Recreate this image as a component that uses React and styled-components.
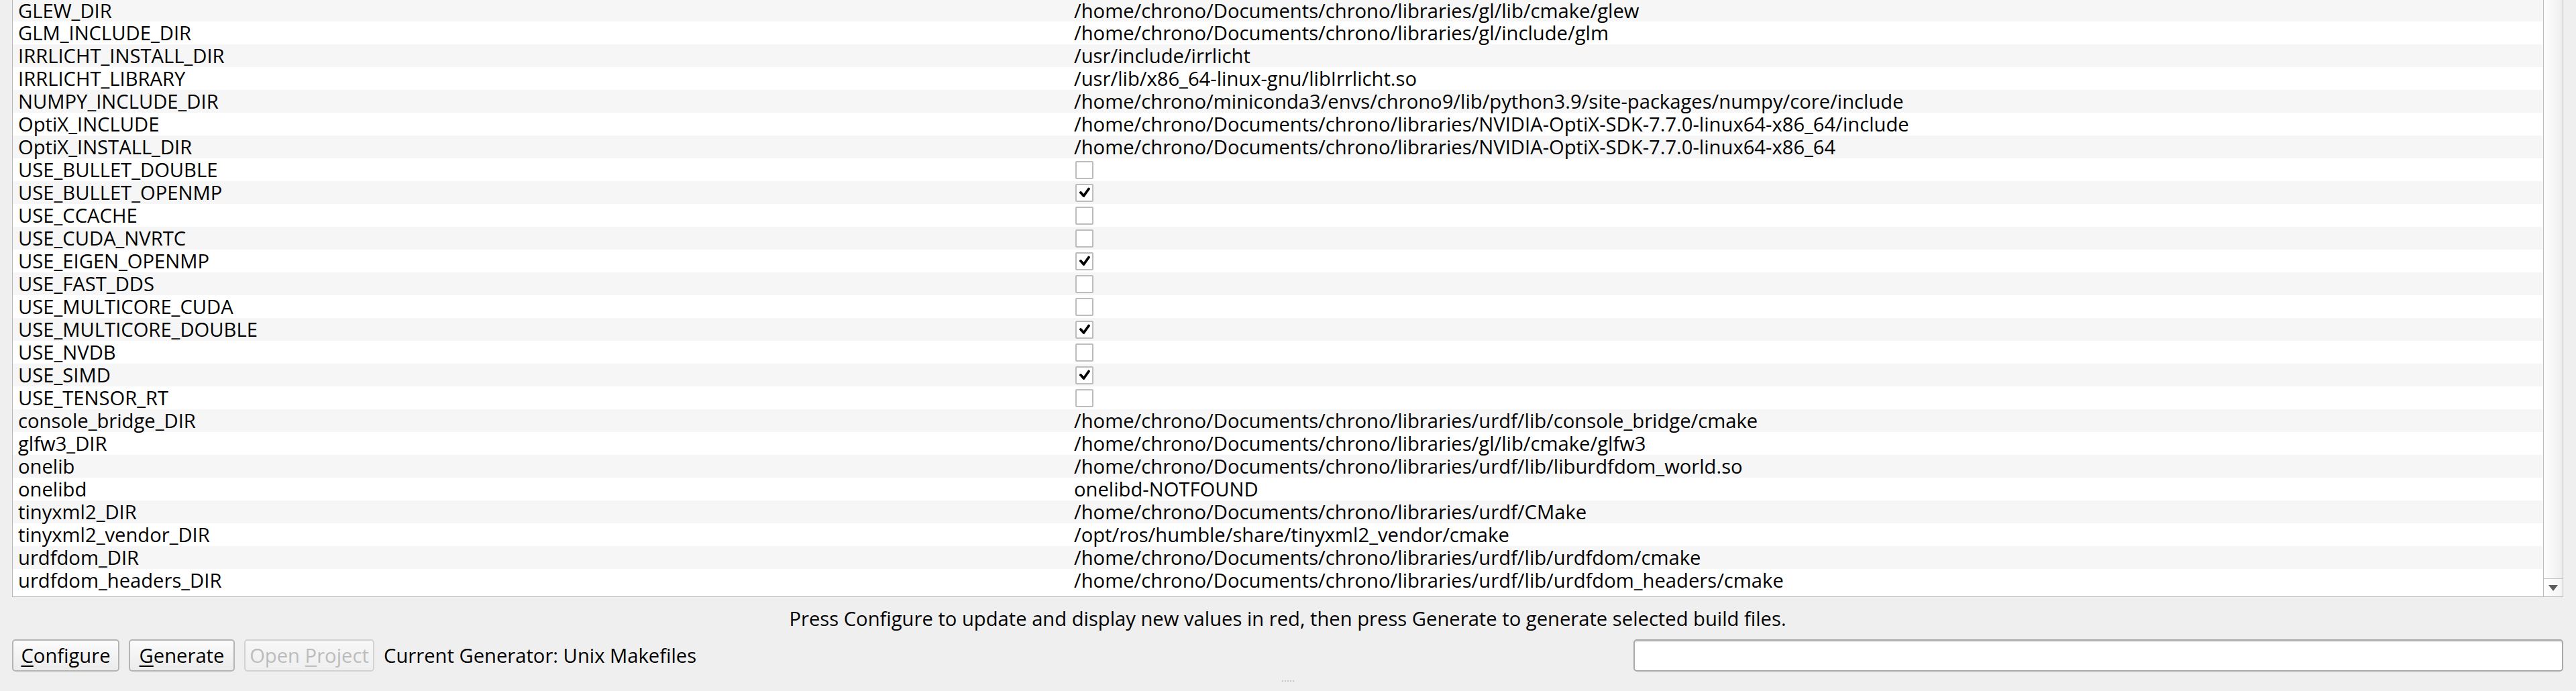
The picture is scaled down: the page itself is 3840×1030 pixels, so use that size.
import React from "react";
import styled, { createGlobalStyle } from "styled-components";

const entries = [
  { name: "GLEW_DIR", value: "/home/chrono/Documents/chrono/libraries/gl/lib/cmake/glew" },
  { name: "GLM_INCLUDE_DIR", value: "/home/chrono/Documents/chrono/libraries/gl/include/glm" },
  { name: "IRRLICHT_INSTALL_DIR", value: "/usr/include/irrlicht" },
  { name: "IRRLICHT_LIBRARY", value: "/usr/lib/x86_64-linux-gnu/libIrrlicht.so" },
  { name: "NUMPY_INCLUDE_DIR", value: "/home/chrono/miniconda3/envs/chrono9/lib/python3.9/site-packages/numpy/core/include" },
  { name: "OptiX_INCLUDE", value: "/home/chrono/Documents/chrono/libraries/NVIDIA-OptiX-SDK-7.7.0-linux64-x86_64/include" },
  { name: "OptiX_INSTALL_DIR", value: "/home/chrono/Documents/chrono/libraries/NVIDIA-OptiX-SDK-7.7.0-linux64-x86_64" },
  { name: "USE_BULLET_DOUBLE", bool: true, checked: false },
  { name: "USE_BULLET_OPENMP", bool: true, checked: true },
  { name: "USE_CCACHE", bool: true, checked: false },
  { name: "USE_CUDA_NVRTC", bool: true, checked: false },
  { name: "USE_EIGEN_OPENMP", bool: true, checked: true },
  { name: "USE_FAST_DDS", bool: true, checked: false },
  { name: "USE_MULTICORE_CUDA", bool: true, checked: false },
  { name: "USE_MULTICORE_DOUBLE", bool: true, checked: true },
  { name: "USE_NVDB", bool: true, checked: false },
  { name: "USE_SIMD", bool: true, checked: true },
  { name: "USE_TENSOR_RT", bool: true, checked: false },
  { name: "console_bridge_DIR", value: "/home/chrono/Documents/chrono/libraries/urdf/lib/console_bridge/cmake" },
  { name: "glfw3_DIR", value: "/home/chrono/Documents/chrono/libraries/gl/lib/cmake/glfw3" },
  { name: "onelib", value: "/home/chrono/Documents/chrono/libraries/urdf/lib/liburdfdom_world.so" },
  { name: "onelibd", value: "onelibd-NOTFOUND" },
  { name: "tinyxml2_DIR", value: "/home/chrono/Documents/chrono/libraries/urdf/CMake" },
  { name: "tinyxml2_vendor_DIR", value: "/opt/ros/humble/share/tinyxml2_vendor/cmake" },
  { name: "urdfdom_DIR", value: "/home/chrono/Documents/chrono/libraries/urdf/lib/urdfdom/cmake" },
  { name: "urdfdom_headers_DIR", value: "/home/chrono/Documents/chrono/libraries/urdf/lib/urdfdom_headers/cmake" }
];

const CheckMark = () => (
  <svg width="18" height="16" viewBox="0 0 18 16">
    <polyline
      points="3,8 7.5,13 15,2.5"
      fill="none"
      stroke="#000"
      strokeWidth="3.8"
      strokeLinecap="round"
      strokeLinejoin="round"
    />
  </svg>
);

const App = () => {
  return (
    <>
      <GlobalStyle />
      <Window>
        <TableFrame>
          <Rows>
            {entries.map((entry, i) => (
              <Row key={entry.name} $alt={i % 2 === 0} $first={i === 0}>
                <NameCell>{entry.name}</NameCell>
                <ValueCell>
                  {entry.bool ? (
                    <CheckBox>{entry.checked && <CheckMark />}</CheckBox>
                  ) : (
                    entry.value
                  )}
                </ValueCell>
              </Row>
            ))}
          </Rows>
          <ScrollBar>
            <Track />
            <ArrowButton>
              <svg width="14" height="9" viewBox="0 0 14 9">
                <polygon points="0,0 14,0 7,9" fill="#5c5c5c" />
              </svg>
            </ArrowButton>
          </ScrollBar>
        </TableFrame>
        <Status>
          Press Configure to update and display new values in red, then press
          Generate to generate selected build files.
        </Status>
        <ButtonRow>
          <Button $width={160}>
            <u>C</u>onfigure
          </Button>
          <Button $width={158}>
            <u>G</u>enerate
          </Button>
          <Button $width={194} disabled>
            Open <u>P</u>roject
          </Button>
          <GeneratorLabel>Current Generator: Unix Makefiles</GeneratorLabel>
          <Spacer />
          <SearchField />
        </ButtonRow>
        <BottomStrip>
          <Grip />
        </BottomStrip>
      </Window>
    </>
  );
};

const GlobalStyle = createGlobalStyle`
  html, body {
    margin: 0;
    padding: 0;
    background: #efefef;
  }
  body {
    font-family: "Open Sans", "DejaVu Sans", sans-serif;
  }
`;

const Window = styled.div`
  width: 3840px;
  height: 1030px;
  box-sizing: border-box;
  padding: 0 19px 0 18px;
  display: flex;
  flex-direction: column;
  background: #efefef;
  color: #000;
  font-size: 29.2px;
  overflow: hidden;
`;

const TableFrame = styled.div`
  height: 890px;
  flex-shrink: 0;
  box-sizing: border-box;
  display: flex;
  background: #fff;
  border: 1px solid #b9b9b9;
  border-top: none;
`;

const Rows = styled.div`
  flex: 1;
  overflow: hidden;
`;

const Row = styled.div`
  display: grid;
  grid-template-columns: 1576px 1fr;
  align-items: center;
  height: ${(p) => (p.$first ? 32 : 34)}px;
  line-height: ${(p) => (p.$first ? 30 : 34)}px;
  background: ${(p) => (p.$alt ? "#f6f6f6" : "#ffffff")};
  white-space: nowrap;
`;

const NameCell = styled.div`
  padding-left: 8px;
`;

const ValueCell = styled.div`
  padding-left: 6px;
  display: flex;
  align-items: center;
`;

const CheckBox = styled.span`
  width: 27px;
  height: 27px;
  box-sizing: border-box;
  margin-left: 2px;
  border: 2px solid #bdbdbd;
  border-radius: 2px;
  background: #fff;
  display: flex;
  align-items: center;
  justify-content: center;
`;

const ScrollBar = styled.div`
  width: 28px;
  flex-shrink: 0;
  display: flex;
  flex-direction: column;
  border-left: 1px solid #bdbdbd;
`;

const Track = styled.div`
  flex: 1;
  background: linear-gradient(to right, #fefefe, #eeeeee);
`;

const ArrowButton = styled.div`
  height: 27px;
  box-sizing: border-box;
  border-top: 1px solid #c6c6c6;
  background: linear-gradient(to right, #ffffff, #f4f4f4);
  display: flex;
  align-items: center;
  justify-content: center;
`;

const Status = styled.div`
  height: 63px;
  flex-shrink: 0;
  display: flex;
  align-items: center;
  justify-content: center;
  white-space: nowrap;
`;

const ButtonRow = styled.div`
  height: 48px;
  flex-shrink: 0;
  display: flex;
  align-items: center;
  gap: 14px;
`;

const Button = styled.button`
  width: ${(p) => p.$width}px;
  height: 48px;
  box-sizing: border-box;
  padding: 0;
  font-family: inherit;
  font-size: 29.2px;
  color: #000;
  border: 2px solid #b4b4b4;
  border-radius: 5px;
  background: linear-gradient(to bottom, #fbfbfb, #ebebeb);
  white-space: nowrap;

  u {
    text-underline-offset: 4px;
    text-decoration-thickness: 2px;
  }

  &:disabled {
    color: #bcbcbc;
    border-color: #d2d2d2;
    background: linear-gradient(to bottom, #f7f7f7, #efefef);
  }
`;

const GeneratorLabel = styled.span`
  white-space: nowrap;
`;

const Spacer = styled.div`
  flex: 1;
`;

const SearchField = styled.div`
  width: 1386px;
  height: 48px;
  box-sizing: border-box;
  background: #fff;
  border: 2px solid #a8a8a8;
  border-radius: 5px;
  box-shadow: inset 0 2px 1px #e4e4e4;
`;

const BottomStrip = styled.div`
  flex: 1;
  display: flex;
  align-items: center;
  justify-content: center;
`;

const Grip = styled.div`
  width: 18px;
  height: 2px;
  border-top: 2px dotted #c4c4c4;
`;

export default App;
